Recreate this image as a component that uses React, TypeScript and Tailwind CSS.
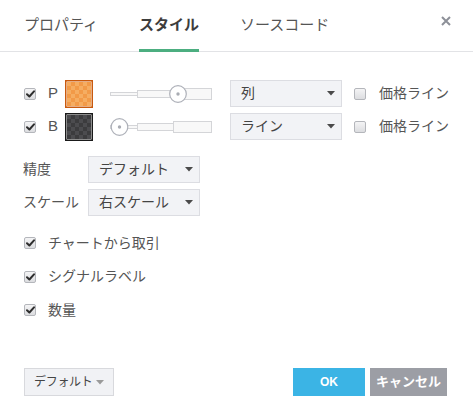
import React from "react";

const font = { fontFamily: '"Liberation Sans", "Noto Sans CJK JP", sans-serif' };

function Check({ checked }: { checked: boolean }) {
  return (
    <div className="w-[12px] h-[12px] rounded-[2px] border border-[#b4b6bb] bg-[linear-gradient(#f4f4f5,#dcdde0)] flex items-center justify-center shrink-0">
      {checked && (
        <svg width="9" height="8" viewBox="0 0 9 8">
          <path d="M1 4.2 L3.4 6.5 L8 1.3" stroke="#2e2e2e" strokeWidth="2" fill="none" strokeLinecap="round" strokeLinejoin="round" />
        </svg>
      )}
    </div>
  );
}

function Swatch({ a, b, border, id }: { a: string; b: string; border: string; id: string }) {
  return (
    <svg width="28" height="28" viewBox="0 0 28 28" className="shrink-0">
      <defs>
        <pattern id={id} width="8" height="8" patternUnits="userSpaceOnUse" x="2" y="2">
          <rect width="8" height="8" fill={a} />
          <rect width="4" height="4" fill={b} />
          <rect x="4" y="4" width="4" height="4" fill={b} />
        </pattern>
      </defs>
      <rect x="0.75" y="0.75" width="26.5" height="26.5" fill="white" stroke={border} strokeWidth="1.5" />
      <rect x="2" y="2" width="24" height="24" fill={`url(#${id})`} />
    </svg>
  );
}

function Slider({ pos }: { pos: number }) {
  return (
    <div className="w-[104px] h-[20px] shrink-0">
      <svg width="104" height="20" viewBox="0 0 104 20" style={{ width: 104, height: 20 }}>
        <rect x="0.5" y="8.5" width="27" height="3" fill="#f8f8f8" stroke="#d4d5d8" />
        <rect x="27.5" y="6.5" width="36" height="7" fill="#f8f8f8" stroke="#d4d5d8" />
        <rect x="63.5" y="4.5" width="38" height="11" fill="#f8f8f8" stroke="#d4d5d8" />
        <circle cx={pos} cy="10" r="8.3" fill="white" stroke="#aeb1b9" strokeWidth="1.2" />
        <circle cx={pos} cy="10" r="1.7" fill="#a9acb3" />
      </svg>
    </div>
  );
}

function Arrow({ color = "#4a4a4a" }: { color?: string }) {
  return (
    <svg width="8" height="5" viewBox="0 0 8 5" className="shrink-0">
      <path d="M0 0 L8 0 L4 4.5 Z" fill={color} />
    </svg>
  );
}

function Select({ label, w }: { label: string; w: number }) {
  return (
    <div
      className="h-[27px] bg-[#f2f3f6] border border-[#dcdde2] flex items-center justify-between pl-[10px] pr-[6px] text-[14px] text-[#444] whitespace-nowrap"
      style={{ width: w }}
    >
      <span>{label}</span>
      <Arrow />
    </div>
  );
}

export default function App() {
  return (
    <div className="w-[473px] h-[419px] bg-white text-[#4a4a4a] relative" style={font}>
      <div className="h-[52px] border-b border-[#e2e3e6] flex items-stretch pl-[24px] relative">
        <div className="w-[115px] flex items-center text-[15px] text-[#555]">プロパティ</div>
        <div className="w-[101px] flex items-center text-[15px] font-bold text-[#3d3d3d] relative">
          <span className="relative h-full flex items-center">
            スタイル
            <span className="absolute left-0 right-0 bottom-[-1px] h-[3px] bg-[#4cae80]" />
          </span>
        </div>
        <div className="flex items-center text-[15px] text-[#555]">ソースコード</div>
        <div className="absolute right-[22px] top-[16px]">
          <svg width="10" height="10" viewBox="0 0 10 10">
            <path d="M1 1 L9 9 M9 1 L1 9" stroke="#8d9098" strokeWidth="2" />
          </svg>
        </div>
      </div>

      <div className="pl-[24px] pt-[28px] flex flex-col gap-[6px]">
        {[
          { l: "P", a: "#f29a48", b: "#f5ad62", border: "#c95a0e", sel: "列", pos: 68, id: "pp" },
          { l: "B", a: "#3c3c3e", b: "#4c4c4f", border: "#1a1a1a", sel: "ライン", pos: 9.5, id: "bb" },
        ].map((r) => (
          <div key={r.l} className="h-[27px] flex items-center">
            <Check checked />
            <div className="w-[29px] pl-[12px] text-[15px] text-[#555]">{r.l}</div>
            <Swatch a={r.a} b={r.b} border={r.border} id={r.id} />
            <div className="w-[17px]" />
            <Slider pos={r.pos} />
            <div className="w-[16px]" />
            <Select label={r.sel} w={112} />
            <div className="w-[12px]" />
            <Check checked={false} />
            <span className="ml-[13px] text-[14px] text-[#555]">価格ライン</span>
          </div>
        ))}
      </div>

      <div className="pl-[23px] pt-[16px] flex flex-col gap-[6px]">
        <div className="h-[27px] flex items-center">
          <span className="w-[65px] text-[14px] text-[#555]">精度</span>
          <Select label="デフォルト" w={112} />
        </div>
        <div className="h-[27px] flex items-center">
          <span className="w-[65px] text-[14px] text-[#555]">スケール</span>
          <Select label="右スケール" w={112} />
        </div>
      </div>

      <div className="pl-[24px] pt-[17px] flex flex-col gap-[13.5px]">
        {["チャートから取引", "シグナルラベル", "数量"].map((t) => (
          <div key={t} className="h-[20px] flex items-center">
            <Check checked />
            <span className="ml-[12px] text-[14px] text-[#555]">{t}</span>
          </div>
        ))}
      </div>

      <div className="absolute left-[24px] right-[26px] top-[368px] flex items-center">
        <div className="w-[90px] h-[28px] bg-[#f1f2f5] border border-[#d8d9dd] flex items-center justify-between pl-[9px] pr-[9px] text-[12px] tracking-[-0.3px] text-[#444] whitespace-nowrap">
          <span>デフォルト</span>
          <Arrow color="#9a9a9a" />
        </div>
        <div className="flex-1" />
        <div className="w-[72px] h-[28px] bg-[#3bb4e5] text-white text-[12px] font-bold flex items-center justify-center">OK</div>
        <div className="w-[5px]" />
        <div className="w-[77px] h-[28px] bg-[#9c9ea5] text-white text-[13px] font-bold flex items-center justify-center whitespace-nowrap">キャンセル</div>
      </div>
    </div>
  );
}
